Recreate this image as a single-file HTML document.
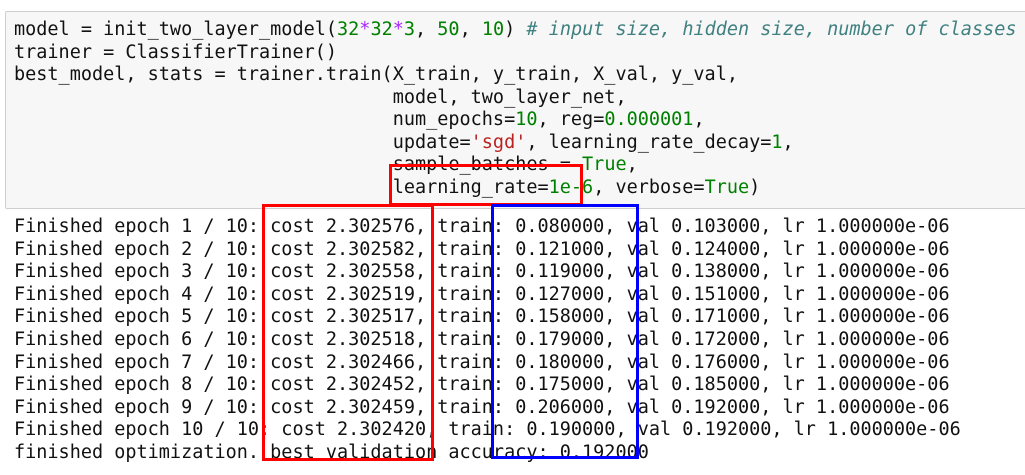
<!DOCTYPE html>
<html><head><style>
body{margin:0;width:1025px;height:475px;background:#fff;overflow:hidden;position:relative;font-family:"DejaVu Sans Mono","Liberation Mono",monospace;font-size:18.5px;}
.code{position:absolute;left:5px;top:11px;width:1030px;height:196px;background:#f7f7f7;border:1px solid #cfcfcf;border-radius:2px;}
pre{margin:0;font:inherit;line-height:22.5px;white-space:pre;position:absolute;}
.n{color:#008000}.o{color:#aa22ff}.s{color:#ba2121}.c{color:#408080;font-style:italic}.k{color:#008000}
.box{position:absolute;border:3px solid;box-sizing:border-box;}
</style></head><body>
<div class="code"></div>
<pre style="left:14px;top:19px;color:#111">model = init_two_layer_model(<span class="n">32</span><span class="o">*</span><span class="n">32</span><span class="o">*</span><span class="n">3</span>, <span class="n">50</span>, <span class="n">10</span>) <span class="c"># input size, hidden size, number of classes</span>
trainer = ClassifierTrainer()
best_model, stats = trainer.train(X_train, y_train, X_val, y_val,
                                  model, two_layer_net,
                                  num_epochs=<span class="n">10</span>, reg=<span class="n">0.000001</span>,
                                  update=<span class="s">'sgd'</span>, learning_rate_decay=<span class="n">1</span>,
                                  sample_batches = <span class="k">True</span>,
                                  learning_rate=<span class="n">1e-6</span>, verbose=<span class="k">True</span>)</pre>
<pre style="left:14px;top:216px;line-height:22.6px;color:#111">Finished epoch 1 / 10: cost 2.302576, train: 0.080000, val 0.103000, lr 1.000000e-06
Finished epoch 2 / 10: cost 2.302582, train: 0.121000, val 0.124000, lr 1.000000e-06
Finished epoch 3 / 10: cost 2.302558, train: 0.119000, val 0.138000, lr 1.000000e-06
Finished epoch 4 / 10: cost 2.302519, train: 0.127000, val 0.151000, lr 1.000000e-06
Finished epoch 5 / 10: cost 2.302517, train: 0.158000, val 0.171000, lr 1.000000e-06
Finished epoch 6 / 10: cost 2.302518, train: 0.179000, val 0.172000, lr 1.000000e-06
Finished epoch 7 / 10: cost 2.302466, train: 0.180000, val 0.176000, lr 1.000000e-06
Finished epoch 8 / 10: cost 2.302452, train: 0.175000, val 0.185000, lr 1.000000e-06
Finished epoch 9 / 10: cost 2.302459, train: 0.206000, val 0.192000, lr 1.000000e-06
Finished epoch 10 / 10: cost 2.302420, train: 0.190000, val 0.192000, lr 1.000000e-06
finished optimization. best validation accuracy: 0.192000</pre>
<div class="box" style="border-color:#f00;left:389px;top:164px;width:194px;height:42px"></div>
<div class="box" style="border-color:#f00;left:262px;top:204px;width:172px;height:257px"></div>
<div class="box" style="border-color:#00f;left:491px;top:204px;width:148px;height:255px"></div>
</body></html>
